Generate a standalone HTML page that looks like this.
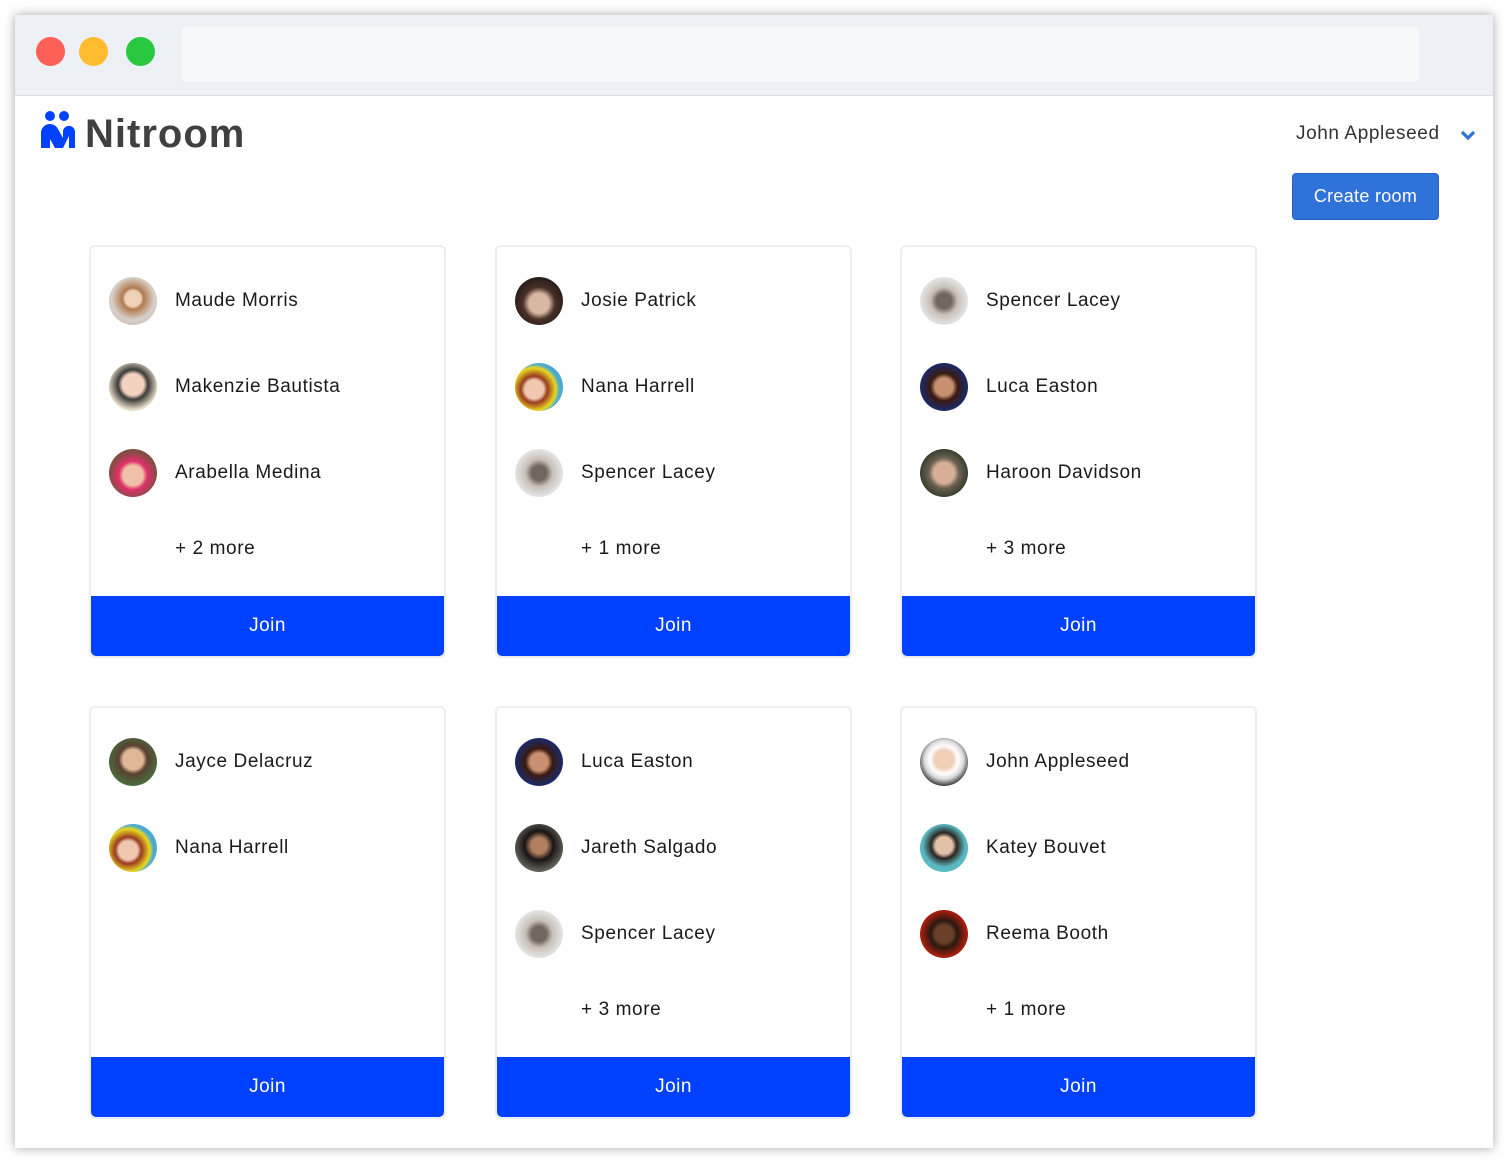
<!DOCTYPE html>
<html><head><meta charset="utf-8"><style>
*{box-sizing:border-box;margin:0;padding:0}
body{width:1508px;height:1163px;background:#fff;position:relative;font-family:"Liberation Sans",sans-serif;overflow:hidden}
.win{position:absolute;left:15px;top:15px;width:1478px;height:1133px;background:#fff;box-shadow:0 0 10px rgba(0,0,0,.35)}
.bar{position:absolute;left:0;top:0;width:100%;height:81px;background:#edf0f4;border-bottom:1px solid #d9dde3}
.dot{position:absolute;top:22px;width:29px;height:29px;border-radius:50%}
.addr{position:absolute;left:167px;top:12px;width:1237px;height:55px;background:#f7f8fa;border-radius:4px}
.logo{position:absolute;left:26px;top:96px}
.brand{position:absolute;left:70px;top:97px;font-size:40px;font-weight:bold;color:#404040;letter-spacing:1px}
.user{position:absolute;left:1281px;top:108px;font-size:19px;color:#333;letter-spacing:.6px}
.chev{position:absolute;left:1444px;top:113px}
.create{position:absolute;left:1277px;top:158px;width:147px;height:47px;background:#2f72d9;border:1px solid #2563c8;border-radius:4px;color:#fff;font-size:18px;text-align:center;line-height:45px;letter-spacing:.3px}
.card{position:absolute;width:357px;height:413px;background:#fff;border:2px solid #eceef0;border-radius:6px;overflow:hidden}
.row{position:absolute;left:18px;height:48px;display:flex;align-items:center}
.av{width:48px;height:48px;border-radius:50%;margin-right:18px;flex:none}
.nm{font-size:19px;color:#1a1a1a;letter-spacing:.6px}
.more{position:absolute;left:84px;font-size:19px;color:#1a1a1a;letter-spacing:.6px}
.join{position:absolute;left:0;bottom:0;width:100%;height:60px;background:#0041ff;color:#fff;font-size:19px;text-align:center;line-height:60px;border-radius:0 0 5px 5px;letter-spacing:.5px}
.a1{background:radial-gradient(circle at 50% 45%,#f0d2b8 0 22%,#b07a50 30%,#d8d0c8 60%,#b8b0a8)}
.a2{background:radial-gradient(circle at 50% 45%,#f3d3c0 0 30%,#3a3a38 42%,#e8dcc8 70%)}
.a3{background:radial-gradient(circle at 50% 55%,#f0c0a8 0 28%,#e0306a 40%,#7a5040 70%)}
.a4{background:radial-gradient(circle at 50% 55%,#d8b8a0 0 28%,#4a3028 45%,#2a1e1a 70%)}
.a5{background:radial-gradient(circle at 40% 55%,#f0c8b0 0 24%,#9a3a20 34%,#e8d820 55%,#4aaad0 65%)}
.a6{background:radial-gradient(circle at 50% 50%,#706860 0 22%,#c8c0b8 40%,#e4e4e4 70%)}
.a7{background:radial-gradient(circle at 50% 50%,#c89070 0 26%,#3a1a10 40%,#1a2a6a 70%)}
.a8{background:radial-gradient(circle at 50% 50%,#d8b098 0 30%,#6a6050 45%,#3a4030 70%)}
.a9{background:radial-gradient(circle at 50% 45%,#e0b898 0 28%,#5a4030 40%,#4a6a40 70%)}
.a10{background:radial-gradient(circle at 50% 45%,#b08060 0 22%,#1a1414 40%,#606058 70%)}
.a11{background:radial-gradient(circle at 50% 45%,#f0d0b8 0 26%,#fff 40%,#d8d8d8 55%,#303030 75%)}
.a12{background:radial-gradient(circle at 50% 45%,#e0c0a8 0 24%,#2a2420 36%,#5ab8c0 60%)}
.a13{background:radial-gradient(circle at 50% 50%,#6a4028 0 26%,#2a1810 40%,#b02010 70%)}
</style></head><body>
<div class="win">
<div class="bar">
<div class="dot" style="left:21px;background:#fe5f57"></div>
<div class="dot" style="left:64px;background:#febc2e"></div>
<div class="dot" style="left:111px;background:#28c840"></div>
<div class="addr"></div>
</div>
<svg class="logo" width="36" height="40" viewBox="0 0 36 40"><circle cx="9" cy="5" r="5" fill="#0041ff"/><circle cx="23" cy="5" r="5" fill="#0041ff"/><path d="M0 37V21a9 9 0 0 1 17-3l5 9V20a6 6 0 0 1 12 2v15h-6V25H28l-6 12H14l-5-9v9z" fill="#0041ff"/><path d="M8 20h2v0" fill="none"/></svg>
<div class="brand">Nitroom</div>
<div class="user">John Appleseed</div>
<svg class="chev" width="18" height="14" viewBox="0 0 18 14"><path d="M3 4l6 6 6-6" stroke="#2f72d9" stroke-width="3.2" fill="none"/></svg>
<div class="create">Create room</div>
</div>

<div class="card" style="left:89px;top:245px">
<div class="row" style="top:30px"><div class="av a1"></div><span class="nm">Maude Morris</span></div>
<div class="row" style="top:116px"><div class="av a2"></div><span class="nm">Makenzie Bautista</span></div>
<div class="row" style="top:202px"><div class="av a3"></div><span class="nm">Arabella Medina</span></div>
<div class="more" style="top:291px">+ 2 more</div>
<div class="join">Join</div></div>

<div class="card" style="left:495px;top:245px">
<div class="row" style="top:30px"><div class="av a4"></div><span class="nm">Josie Patrick</span></div>
<div class="row" style="top:116px"><div class="av a5"></div><span class="nm">Nana Harrell</span></div>
<div class="row" style="top:202px"><div class="av a6"></div><span class="nm">Spencer Lacey</span></div>
<div class="more" style="top:291px">+ 1 more</div>
<div class="join">Join</div></div>

<div class="card" style="left:900px;top:245px">
<div class="row" style="top:30px"><div class="av a6"></div><span class="nm">Spencer Lacey</span></div>
<div class="row" style="top:116px"><div class="av a7"></div><span class="nm">Luca Easton</span></div>
<div class="row" style="top:202px"><div class="av a8"></div><span class="nm">Haroon Davidson</span></div>
<div class="more" style="top:291px">+ 3 more</div>
<div class="join">Join</div></div>

<div class="card" style="left:89px;top:706px">
<div class="row" style="top:30px"><div class="av a9"></div><span class="nm">Jayce Delacruz</span></div>
<div class="row" style="top:116px"><div class="av a5"></div><span class="nm">Nana Harrell</span></div>
<div class="join">Join</div></div>

<div class="card" style="left:495px;top:706px">
<div class="row" style="top:30px"><div class="av a7"></div><span class="nm">Luca Easton</span></div>
<div class="row" style="top:116px"><div class="av a10"></div><span class="nm">Jareth Salgado</span></div>
<div class="row" style="top:202px"><div class="av a6"></div><span class="nm">Spencer Lacey</span></div>
<div class="more" style="top:291px">+ 3 more</div>
<div class="join">Join</div></div>

<div class="card" style="left:900px;top:706px">
<div class="row" style="top:30px"><div class="av a11"></div><span class="nm">John Appleseed</span></div>
<div class="row" style="top:116px"><div class="av a12"></div><span class="nm">Katey Bouvet</span></div>
<div class="row" style="top:202px"><div class="av a13"></div><span class="nm">Reema Booth</span></div>
<div class="more" style="top:291px">+ 1 more</div>
<div class="join">Join</div></div>
</body></html>
